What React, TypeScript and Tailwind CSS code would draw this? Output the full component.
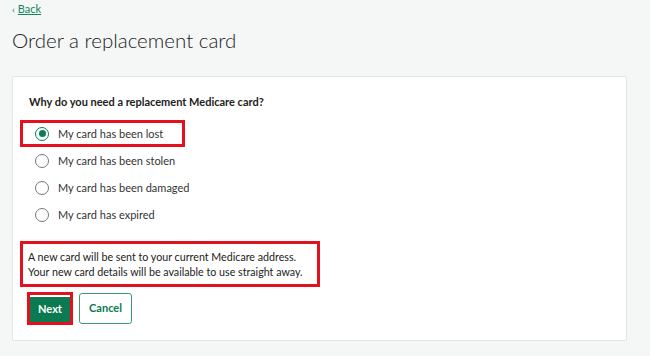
import { useState } from "react";

const options = [
  "My card has been lost",
  "My card has been stolen",
  "My card has been damaged",
  "My card has expired",
];

export default function App() {
  const [choice, setChoice] = useState(0);

  return (
    <div className="min-h-[356px] bg-[#f4f7f6] px-3 pt-[2px] font-['Lato',sans-serif] text-[#333]">
      <a href="#" className="flex items-center gap-[3px] text-[11px] leading-[14px] text-[#12845e]">
        <span className="text-[10px]">‹</span>
        <span className="underline">Back</span>
      </a>
      <h1 className="mt-[10px] text-[20.5px] leading-[28px] font-light text-[#222]">
        Order a replacement card
      </h1>

      {/* question card */}
      <div className="mt-[22px] w-[615px] rounded-[2px] border border-[#e3e6e5] bg-white pb-[15px] pl-[7px] pt-[17px]">
        <p className="whitespace-nowrap pl-[9px] text-[11px] font-bold leading-[16px] text-[#222]">
          Why do you need a replacement Medicare card?
        </p>

        <div className="mt-[10px] flex flex-col items-start">
          {options.map((opt, i) => (
            <label
              key={opt}
              onClick={() => setChoice(i)}
              className={
                i === 0
                  ? "flex h-[27px] w-[165px] cursor-pointer items-center border-[3px] border-[#e3101d] pl-[12px]"
                  : "flex h-[27px] cursor-pointer items-center border-[3px] border-transparent pl-[12px]"
              }
            >
              <span
                className={
                  choice === i
                    ? "flex h-[14px] w-[14px] shrink-0 items-center justify-center rounded-full border-[1.5px] border-[#0a7d55] bg-white"
                    : "flex h-[14px] w-[14px] shrink-0 items-center justify-center rounded-full border border-[#777] bg-white"
                }
              >
                {choice === i && <span className="h-[7px] w-[7px] rounded-full bg-[#0a7d55]" />}
              </span>
              <span className="ml-[9px] whitespace-nowrap text-[11px] leading-[14px]">{opt}</span>
            </label>
          ))}
        </div>

        <div className="mt-[13px] w-[300px] border-[3px] border-[#e3101d] px-[5px] py-[5px] text-[10.7px] leading-[15px] text-[#222]">
          <p className="whitespace-nowrap">A new card will be sent to your current Medicare address.</p>
          <p className="whitespace-nowrap">Your new card details will be available to use straight away.</p>
        </div>

        <div className="mt-[5px] flex items-center gap-[6px] pl-[7px]">
          <div className="border-[3px] border-[#e3101d]">
            <button className="h-[25px] w-[40px] bg-[#0b7a50] text-[11px] font-bold text-white">
              Next
            </button>
          </div>
          <button className="h-[31px] w-[53px] rounded-[3px] border border-[#3b9b78] bg-white text-[11px] font-bold text-[#0b7a50]">
            Cancel
          </button>
        </div>
      </div>
    </div>
  );
}
